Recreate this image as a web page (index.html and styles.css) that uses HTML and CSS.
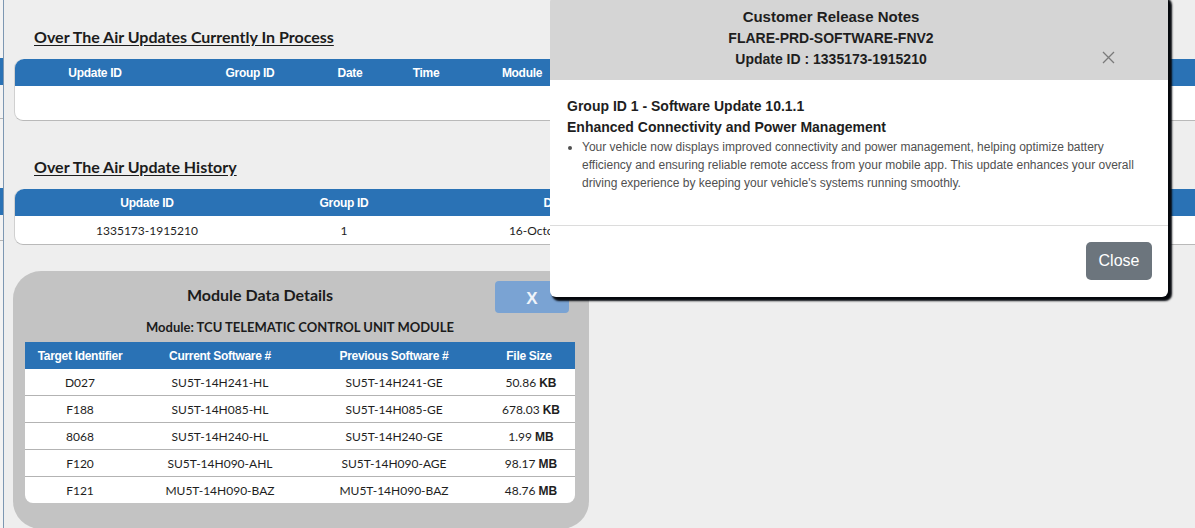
FILE: index.html
```html
<!DOCTYPE html>
<html>
<head>
  <title>Over The Air Updates</title>
  <link rel="stylesheet" href="styles.css">
</head>
<body>
  <div class="page">
    <div class="edge"></div>

    <div class="main">
      <h2 class="section-title">Over The Air Updates Currently In Process</h2>
      <table class="ota-table current">
        <colgroup>
          <col style="width: 160px">
          <col style="width: 150px">
          <col style="width: 50px">
          <col style="width: 102px">
          <col style="width: 90px">
          <col style="width: 140px">
          <col>
        </colgroup>
        <thead>
          <tr>
            <th>Update ID</th>
            <th>Group ID</th>
            <th>Date</th>
            <th>Time</th>
            <th>Module</th>
            <th>Status</th>
            <th>Progress</th>
          </tr>
        </thead>
        <tbody>
          <tr class="empty-row"><td colspan="7"></td></tr>
        </tbody>
      </table>

      <h2 class="section-title">Over The Air Update History</h2>
      <table class="ota-table history">
        <colgroup>
          <col style="width: 264px">
          <col style="width: 130px">
          <col style="width: 294px">
          <col>
        </colgroup>
        <thead>
          <tr>
            <th>Update ID</th>
            <th>Group ID</th>
            <th>Date</th>
            <th>Release Notes</th>
          </tr>
        </thead>
        <tbody>
          <tr>
            <td>1335173-1915210</td>
            <td>1</td>
            <td>16-October-2024</td>
            <td>View</td>
          </tr>
        </tbody>
      </table>

      <div class="module-panel">
        <div class="module-head">
          <h3>Module Data Details</h3>
          <button class="module-close">X</button>
        </div>
        <div class="module-body">
          <div class="module-name">Module: TCU TELEMATIC CONTROL UNIT MODULE</div>
          <table class="module-table">
            <colgroup>
              <col style="width: 110px">
              <col style="width: 170px">
              <col style="width: 178px">
              <col>
            </colgroup>
            <thead>
              <tr>
                <th>Target Identifier</th>
                <th>Current Software #</th>
                <th>Previous Software #</th>
                <th>File Size</th>
              </tr>
            </thead>
            <tbody>
              <tr><td>D027</td><td>SU5T-14H241-HL</td><td>SU5T-14H241-GE</td><td>50.86 <b>KB</b></td></tr>
              <tr><td>F188</td><td>SU5T-14H085-HL</td><td>SU5T-14H085-GE</td><td>678.03 <b>KB</b></td></tr>
              <tr><td>8068</td><td>SU5T-14H240-HL</td><td>SU5T-14H240-GE</td><td>1.99 <b>MB</b></td></tr>
              <tr><td>F120</td><td>SU5T-14H090-AHL</td><td>SU5T-14H090-AGE</td><td>98.17 <b>MB</b></td></tr>
              <tr><td>F121</td><td>MU5T-14H090-BAZ</td><td>MU5T-14H090-BAZ</td><td>48.76 <b>MB</b></td></tr>
            </tbody>
          </table>
        </div>
      </div>
    </div>
  </div>

  <div class="modal">
    <div class="modal-header">
      <div class="modal-title">Customer Release Notes</div>
      <div class="modal-sub">FLARE-PRD-SOFTWARE-FNV2</div>
      <div class="modal-sub">Update ID : 1335173-1915210</div>
      <button class="modal-x" aria-label="Close">
        <svg width="13" height="13" viewBox="0 0 13 13">
          <path d="M1 1 L12 12 M12 1 L1 12" stroke="#7a7a7a" stroke-width="1.3" fill="none"/>
        </svg>
      </button>
    </div>
    <div class="modal-body">
      <h4>Group ID 1 - Software Update 10.1.1</h4>
      <h4>Enhanced Connectivity and Power Management</h4>
      <ul>
        <li>Your vehicle now displays improved connectivity and power management, helping optimize battery<br>
          efficiency and ensuring reliable remote access from your mobile app. This update enhances your overall<br>
          driving experience by keeping your vehicle's systems running smoothly.</li>
      </ul>
    </div>
    <div class="modal-footer">
      <button class="btn-close">Close</button>
    </div>
  </div>
</body>
</html>
```

FILE: styles.css
```css
body {
  margin: 0;
  background-color: #eeeeee;
  font-family: Lato, "Liberation Sans", sans-serif;
  color: #222;
  overflow: hidden;
}
.page {
  display: flex;
  height: 528px;
  overflow: hidden;
}
.edge {
  width: 3px;
  border-right: 1px solid #7d97b2;
  background:
    linear-gradient(#2a72b5, #2a72b5) 0 58px / 3px 27px no-repeat,
    linear-gradient(#2a72b5, #2a72b5) 0 188px / 3px 27px no-repeat,
    linear-gradient(#b5b5b5, #b5b5b5) 0 118px / 3px 1px no-repeat,
    linear-gradient(#b5b5b5, #b5b5b5) 0 240px / 3px 1px no-repeat,
    #f3f3f3;
}
.main {
  flex: 1;
  padding-left: 10px;
}
.section-title {
  margin: 28px 0 13px 20px;
  font-size: 16px;
  line-height: 18px;
  font-weight: bold;
  text-decoration: underline;
  text-underline-offset: 2px;
  color: #1c1c1c;
}
.section-title + .ota-table + .section-title {
  margin-top: 37px;
}
.ota-table {
  width: 100%;
  table-layout: fixed;
  border-collapse: separate;
  border-spacing: 0;
  background-color: #fff;
  border-radius: 9px 0 0 9px;
  border-bottom: 1px solid #b9b9b9;
  border-left: 1px solid #d0d0d0;
}
.ota-table th {
  background-color: #2a72b5;
  color: #fff;
  height: 27px;
  padding: 0;
  font-family: "Liberation Sans Narrow", "Liberation Sans", sans-serif;
  font-size: 12px;
  letter-spacing: -0.3px;
  font-weight: bold;
  text-align: center;
  white-space: nowrap;
  overflow: hidden;
}
.ota-table th:first-child {
  border-top-left-radius: 9px;
}
.ota-table td {
  height: 28px;
  padding: 0;
  font-size: 12px;
  text-align: center;
  color: #1e1e1e;
  white-space: nowrap;
  overflow: hidden;
}
.ota-table .empty-row td {
  height: 34px;
}
.module-panel {
  margin: 26px 0 0 -1px;
  width: 576px;
  height: 258px;
  background-color: #c3c3c3;
  border-radius: 28px;
}
.module-head {
  display: flex;
  align-items: center;
  padding: 10px 20px 0 12px;
}
.module-head h3 {
  flex: 1;
  margin: 0 0 5px;
  text-align: center;
  font-size: 16px;
  font-weight: bold;
  color: #1c1c1c;
}
.module-close {
  width: 74px;
  height: 32px;
  border: none;
  border-radius: 4px;
  background-color: #7aa3d3;
  color: #eef3fa;
  font-family: "Liberation Sans", Arial, sans-serif;
  font-size: 17px;
  font-weight: bold;
  padding-top: 4px;
}
.module-body {
  margin: 2px 14px 0 12px;
}
.module-name {
  height: 27px;
  line-height: 24px;
  text-align: center;
  font-size: 13px;
  font-weight: bold;
  color: #1c1c1c;
}
.module-table {
  width: 100%;
  table-layout: fixed;
  border-collapse: separate;
  border-spacing: 0;
  background-color: #fff;
  border-radius: 0 0 8px 8px;
}
.module-table th {
  background-color: #2a72b5;
  color: #fff;
  height: 27px;
  padding: 0;
  font-family: "Liberation Sans Narrow", "Liberation Sans", sans-serif;
  font-size: 12px;
  letter-spacing: -0.3px;
  font-weight: bold;
  text-align: center;
  white-space: nowrap;
}
.module-table td {
  height: 26px;
  padding: 0;
  font-size: 12px;
  text-align: center;
  color: #1e1e1e;
  border-bottom: 1px solid #b3b3b3;
}
.module-table tr:last-child td {
  border-bottom: none;
}
.module-table td b {
  font-family: "Liberation Sans", Arial, sans-serif;
  font-size: 12px;
  font-weight: bold;
}
.module-table td:last-child {
  padding-left: 4px;
}
.modal {
  position: absolute;
  top: -4px;
  left: 550px;
  width: 618px;
  height: 301px;
  background-color: #fff;
  border-radius: 6px;
  box-shadow: 3px 3px 2px 1px #05080d;
  font-family: "Liberation Sans", Arial, sans-serif;
  display: flex;
  flex-direction: column;
  overflow: hidden;
}
.modal-header {
  position: relative;
  background-color: #d5d5d5;
  height: 84px;
  padding: 10px 56px 0 0;
  box-sizing: border-box;
  text-align: center;
  color: #1e1e1e;
}
.modal-title {
  font-size: 15px;
  font-weight: bold;
  line-height: 22px;
}
.modal-sub {
  font-size: 14px;
  font-weight: bold;
  line-height: 21px;
}
.modal-x {
  position: absolute;
  right: 53px;
  top: 55px;
  border: none;
  background: none;
  padding: 0;
  line-height: 0;
}
.modal-body {
  height: 146px;
  padding: 16px 8px 0 17px;
  border-bottom: 1px solid #dcdcdc;
  box-sizing: border-box;
}
.modal-body h4 {
  margin: 0;
  font-size: 14px;
  line-height: 21px;
  color: #1e1e1e;
}
.modal-body ul {
  margin: 0;
  padding-left: 15px;
  font-size: 12px;
  line-height: 18px;
  color: #505050;
  white-space: nowrap;
}
.modal-footer {
  flex: 1;
  display: flex;
  justify-content: flex-end;
  align-items: flex-start;
  padding: 16px 16px 0 0;
}
.btn-close {
  width: 66px;
  height: 38px;
  border: none;
  border-radius: 5px;
  background-color: #6c757d;
  color: #fff;
  font-family: "Liberation Sans", Arial, sans-serif;
  font-size: 16px;
}
```
